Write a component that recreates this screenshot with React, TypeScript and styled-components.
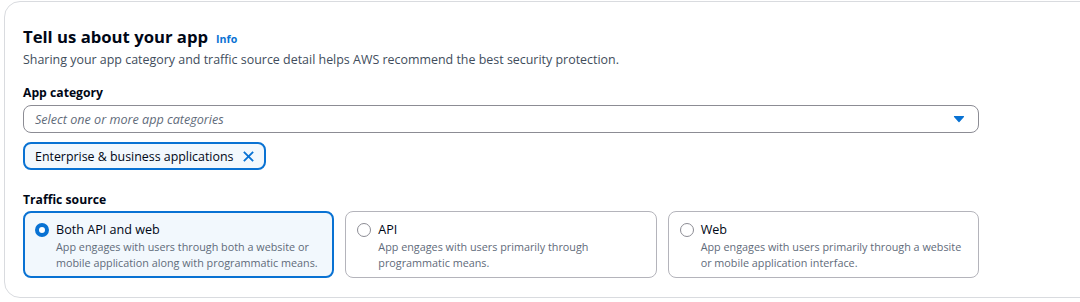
import React from "react";
import styled, { createGlobalStyle } from "styled-components";

const GlobalStyle = createGlobalStyle`
  html, body {
    margin: 0;
    padding: 0;
    background: #ffffff;
    overflow: hidden;
  }
  body {
    font-family: "Open Sans", "Noto Sans", Arial, sans-serif;
    color: #000716;
  }
`;

type Option = {
  id: string;
  label: string;
  description: string;
};

const options: Option[] = [
  {
    id: "both",
    label: "Both API and web",
    description:
      "App engages with users through both a website or mobile application along with programmatic means.",
  },
  {
    id: "api",
    label: "API",
    description: "App engages with users primarily through programmatic means.",
  },
  {
    id: "web",
    label: "Web",
    description:
      "App engages with users primarily through a website or mobile application interface.",
  },
];

const Page = styled.div`
  padding: 1px 0 0 4px;
  width: 1200px;
`;

const Card = styled.section`
  box-sizing: border-box;
  width: 1100px;
  height: 297px;
  border: 1px solid #d9dbdf;
  border-radius: 16px;
  padding: 23px 18px 0;
`;

const Content = styled.div`
  width: 956px;
`;

const HeaderRow = styled.div`
  display: flex;
  align-items: baseline;
  gap: 8px;
`;

const Title = styled.h2`
  margin: 0;
  font-size: 16.7px;
  line-height: 24px;
  font-weight: 700;
`;

const InfoLink = styled.a`
  font-size: 10.6px;
  font-weight: 700;
  color: #0972d3;
  text-decoration: none;
`;

const Description = styled.p`
  margin: 1px 0 0;
  font-size: 12.45px;
  line-height: 20px;
  color: #414d5c;
`;

const Label = styled.div<{ $top: number }>`
  margin-top: ${(p) => p.$top}px;
  font-size: 12.2px;
  line-height: 20px;
  font-weight: 700;
`;

const Select = styled.div`
  box-sizing: border-box;
  margin-top: 2px;
  height: 28px;
  border: 1px solid #8c8c94;
  border-radius: 8px;
  display: flex;
  align-items: center;
  justify-content: space-between;
  padding: 0 13px 0 11px;
`;

const Placeholder = styled.span`
  font-size: 12.6px;
  font-style: italic;
  color: #5f6b7a;
`;

const Token = styled.div`
  box-sizing: border-box;
  margin-top: 9px;
  height: 28px;
  display: inline-flex;
  align-items: center;
  gap: 9px;
  padding: 0 9px 0 10px;
  border: 2px solid #0972d3;
  border-radius: 8px;
  background: #f2f8fd;
  font-size: 12.4px;
`;

const Tiles = styled.div`
  margin-top: 1px;
  display: grid;
  grid-template-columns: repeat(3, 1fr);
  gap: 11px;
`;

const Tile = styled.label<{ $selected: boolean }>`
  box-sizing: border-box;
  height: 67px;
  display: flex;
  gap: 7px;
  padding: ${(p) => (p.$selected ? "7px 10px 0 10px" : "8px 11px 0 11px")};
  border: ${(p) => (p.$selected ? "2px solid #0972d3" : "1px solid #b4b4bb")};
  border-radius: 8px;
  background: ${(p) => (p.$selected ? "#f2f8fd" : "#ffffff")};
`;

const Radio = styled.span<{ $checked: boolean }>`
  box-sizing: border-box;
  flex: none;
  margin-top: 3px;
  width: 14px;
  height: 14px;
  border-radius: 50%;
  background: #ffffff;
  border: ${(p) => (p.$checked ? "4px solid #0972d3" : "1px solid #8c8c94")};
`;

const TileText = styled.div`
  display: flex;
  flex-direction: column;
  max-width: 262px;
`;

const TileLabel = styled.span`
  font-size: 12.6px;
  line-height: 19px;
`;

const TileDescription = styled.span`
  font-size: 10.8px;
  line-height: 16px;
  color: #5f6b7a;
`;

const Caret = () => (
  <svg width="12" height="8" viewBox="0 0 12 8">
    <path d="M1.5 1.5h9L6 6.5z" fill="#0972d3" stroke="#0972d3" strokeWidth="1.2" strokeLinejoin="round" />
  </svg>
);

const Dismiss = () => (
  <svg width="13" height="13" viewBox="0 0 14 14">
    <path d="M2 2l10 10M12 2L2 12" stroke="#0972d3" strokeWidth="2" fill="none" />
  </svg>
);

export default function App() {
  const selected = "both";
  return (
    <Page>
      <GlobalStyle />
      <Card>
        <Content>
          <HeaderRow>
            <Title>Tell us about your app</Title>
            <InfoLink href="#">Info</InfoLink>
          </HeaderRow>
          <Description>
            Sharing your app category and traffic source detail helps AWS recommend the best security protection.
          </Description>

          <Label $top={13}>App category</Label>
          <Select>
            <Placeholder>Select one or more app categories</Placeholder>
            <Caret />
          </Select>
          <Token>
            <span>Enterprise &amp; business applications</span>
            <Dismiss />
          </Token>

          <Label $top={20}>Traffic source</Label>
          <Tiles>
            {options.map((o) => (
              <Tile key={o.id} $selected={o.id === selected}>
                <Radio $checked={o.id === selected} />
                <TileText>
                  <TileLabel>{o.label}</TileLabel>
                  <TileDescription>{o.description}</TileDescription>
                </TileText>
              </Tile>
            ))}
          </Tiles>
        </Content>
      </Card>
    </Page>
  );
}
